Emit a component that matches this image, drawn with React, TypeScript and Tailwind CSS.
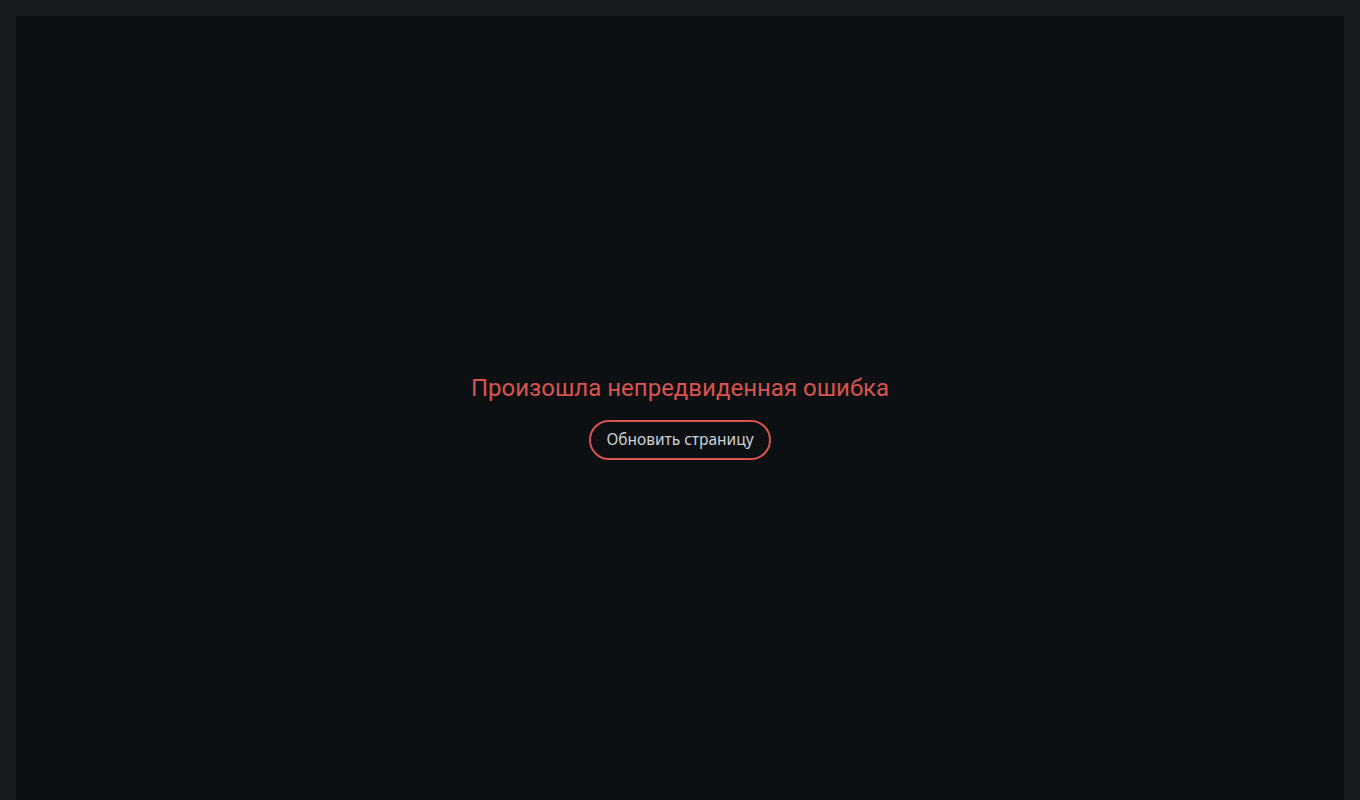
import React from "react";

export default function App() {
  return (
    <div className="bg-[#151b1f] px-4 pt-4 h-[800px] overflow-hidden">
      <div className="bg-[#0c1013] h-[800px] flex flex-col items-center justify-center">
        <h1
          className="text-[24px] leading-[30px] text-[#d9534f]"
          style={{ fontFamily: "Roboto, sans-serif" }}
        >
          Произошла непредвиденная ошибка
        </h1>
        <button
          className="mt-[17px] h-[40px] px-[15px] rounded-full border-2 border-[#d9534f] text-[15.5px] text-[#cfd1d3]"
          style={{ fontFamily: "'Noto Sans', sans-serif" }}
        >
          Обновить страницу
        </button>
      </div>
    </div>
  );
}
